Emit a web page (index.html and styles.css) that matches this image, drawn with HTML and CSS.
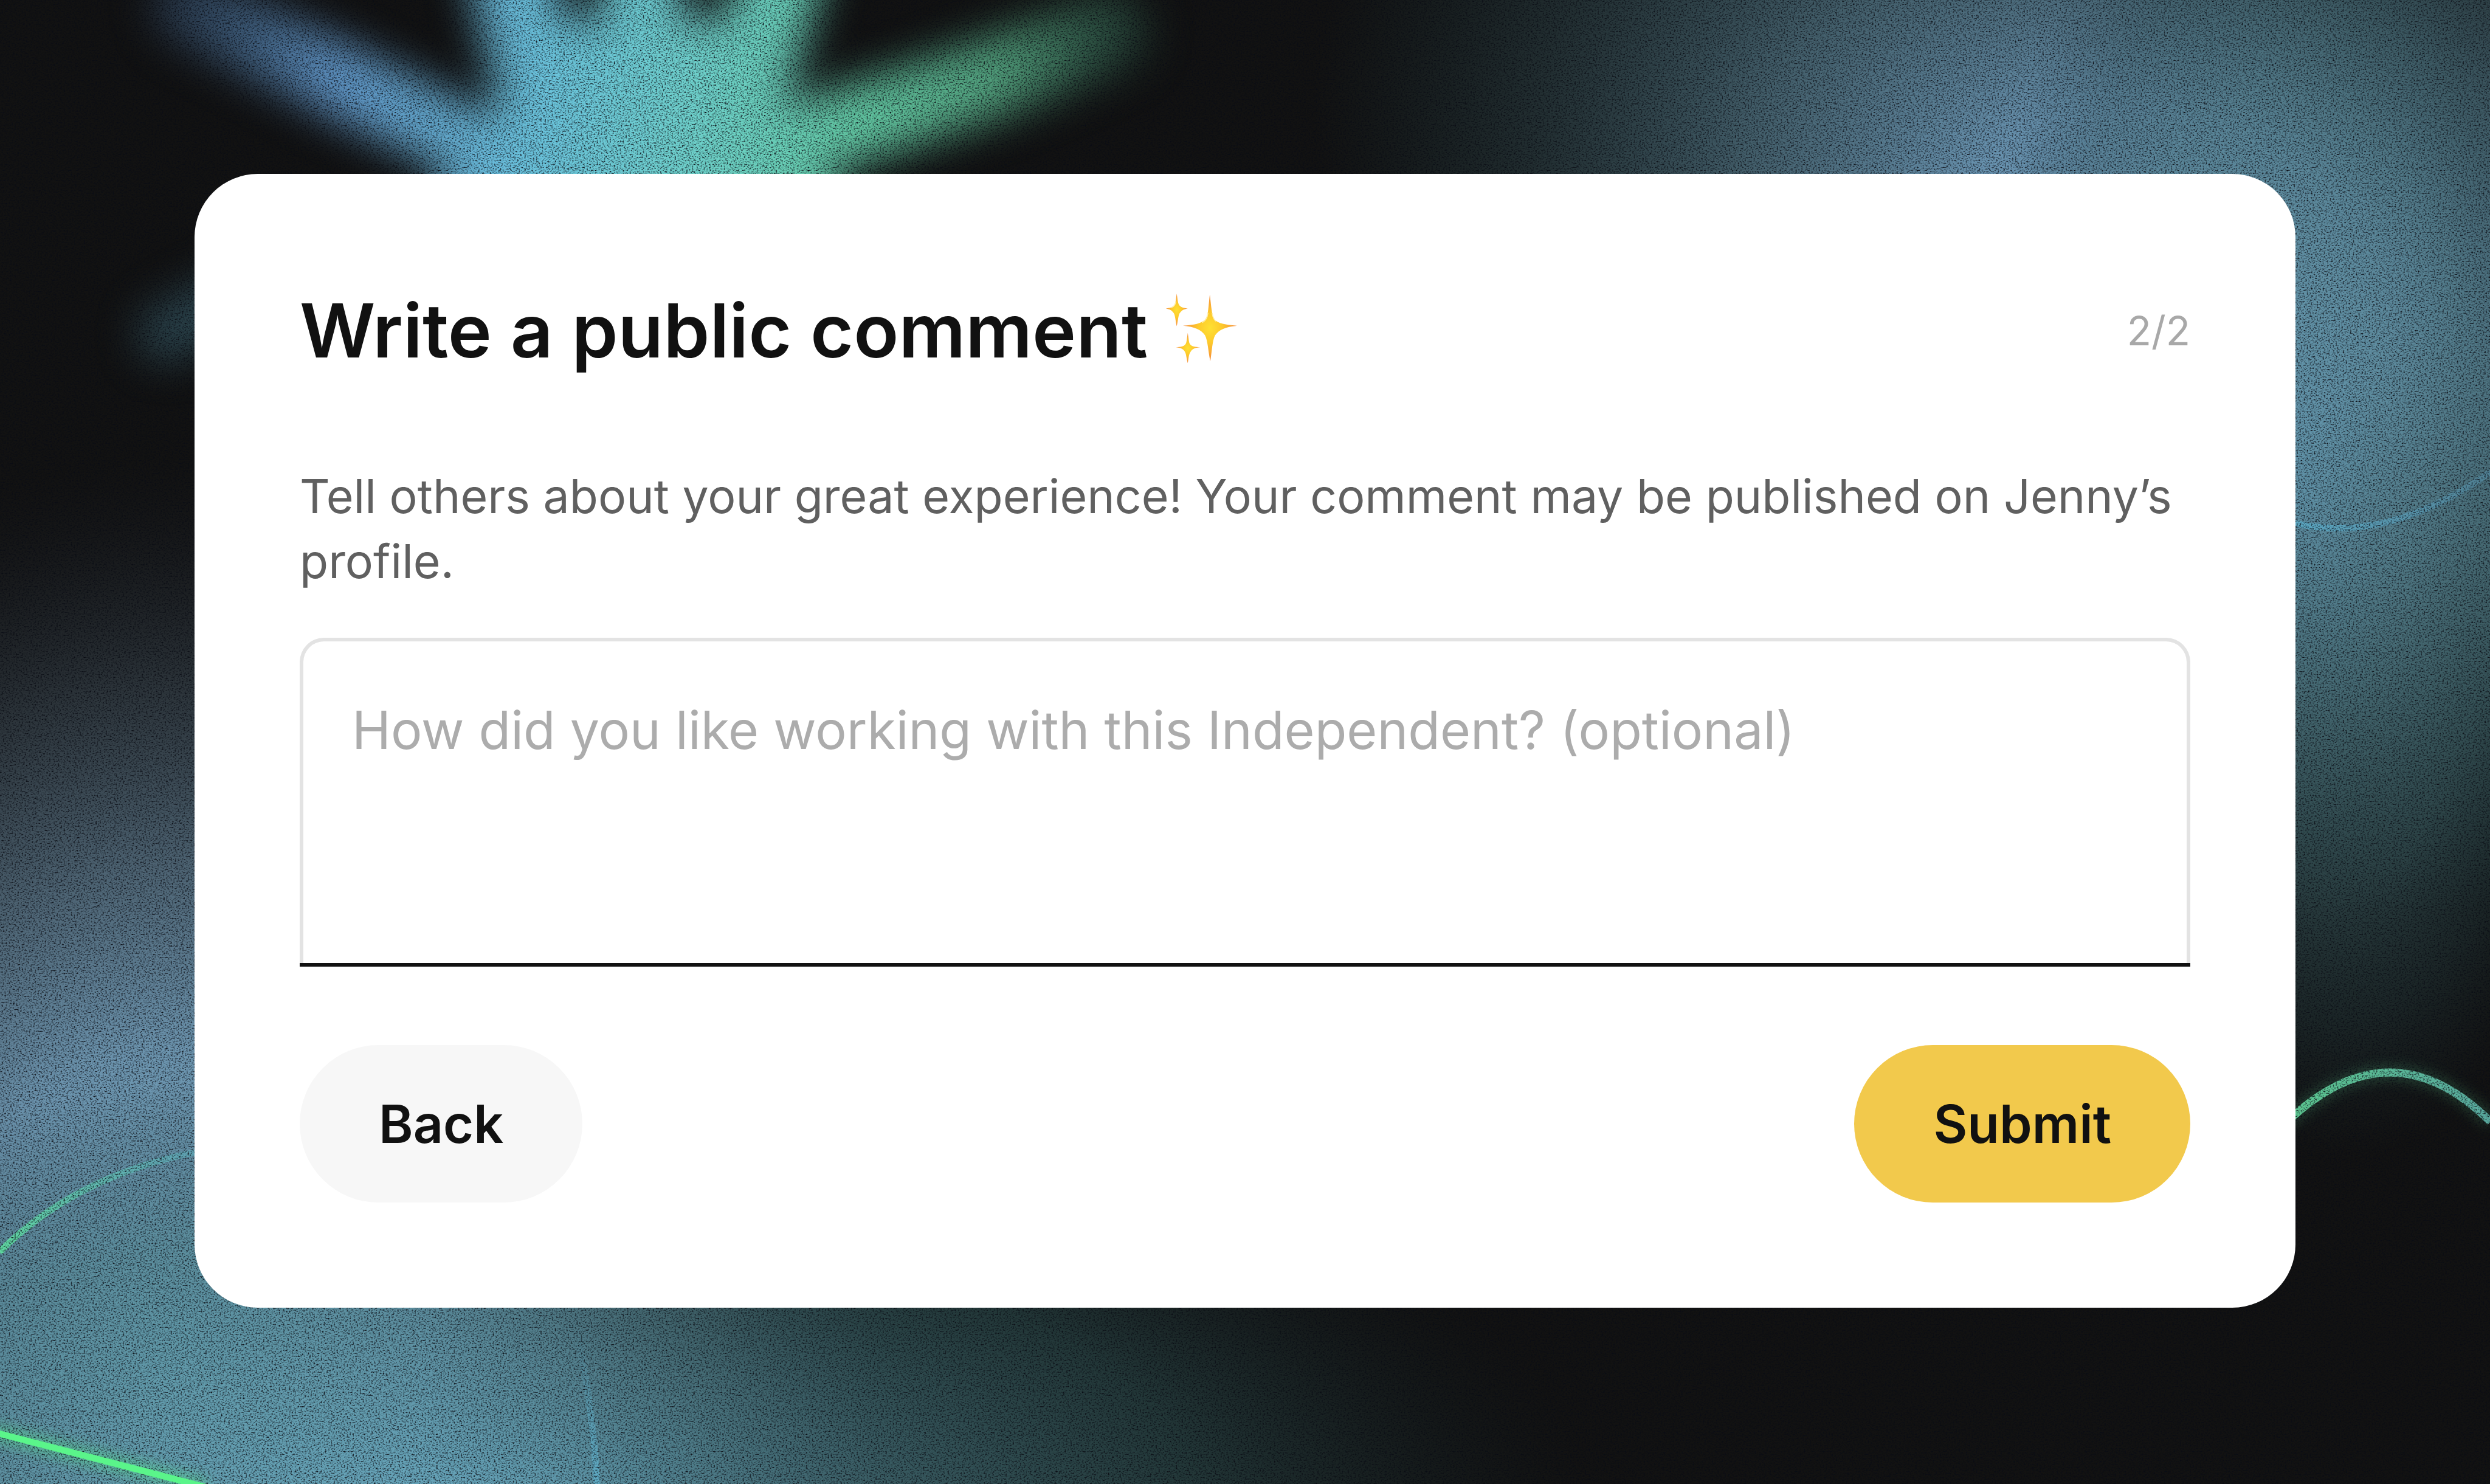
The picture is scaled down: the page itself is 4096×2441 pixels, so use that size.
FILE: index.html
```
<!DOCTYPE html>
<html lang="en">
<head>
  <meta charset="UTF-8">
  <meta name="viewport" content="width=device-width, initial-scale=1.0">
  <title>Write a public comment</title>
  <link rel="stylesheet" href="styles.css">
</head>
<body>
  <!-- Backdrop: colour glows, blurred hand, thin light lines, grain -->
  <svg class="backdrop" viewBox="0 0 1568 934" preserveAspectRatio="xMidYMid slice" aria-hidden="true">
    <defs>
      <radialGradient id="glowRight" gradientUnits="userSpaceOnUse" cx="0" cy="0" r="1" gradientTransform="translate(1370 170) rotate(20) scale(560 380)">
        <stop offset="0" stop-color="#74a4c6"/>
        <stop offset="0.25" stop-color="#6c98b6" stop-opacity="0.95"/>
        <stop offset="0.5" stop-color="#587f90" stop-opacity="0.7"/>
        <stop offset="0.75" stop-color="#3e6068" stop-opacity="0.35"/>
        <stop offset="1" stop-color="#25474a" stop-opacity="0"/>
      </radialGradient>
      <radialGradient id="glowEdge" gradientUnits="userSpaceOnUse" cx="0" cy="0" r="1" gradientTransform="translate(1450 310) rotate(-4) scale(200 420)">
        <stop offset="0" stop-color="#6299ae" stop-opacity="0.7"/>
        <stop offset="0.35" stop-color="#568792" stop-opacity="0.55"/>
        <stop offset="0.6" stop-color="#467278" stop-opacity="0.45"/>
        <stop offset="0.8" stop-color="#2f5054" stop-opacity="0.3"/>
        <stop offset="1" stop-color="#1e3436" stop-opacity="0"/>
      </radialGradient>
      <radialGradient id="glowLeft" gradientUnits="userSpaceOnUse" cx="0" cy="0" r="1" gradientTransform="translate(110 860) scale(450 570)">
        <stop offset="0" stop-color="#76aec6"/>
        <stop offset="0.35" stop-color="#6c94ae"/>
        <stop offset="0.55" stop-color="#587284" stop-opacity="0.85"/>
        <stop offset="0.75" stop-color="#465662" stop-opacity="0.5"/>
        <stop offset="1" stop-color="#20242c" stop-opacity="0"/>
      </radialGradient>
      <radialGradient id="glowBottom" gradientUnits="userSpaceOnUse" cx="0" cy="0" r="1" gradientTransform="translate(300 950) scale(700 280)">
        <stop offset="0" stop-color="#6ab2c8" stop-opacity="0.8"/>
        <stop offset="0.35" stop-color="#57939f" stop-opacity="0.6"/>
        <stop offset="0.65" stop-color="#3b6e70" stop-opacity="0.4"/>
        <stop offset="1" stop-color="#182a2c" stop-opacity="0"/>
      </radialGradient>
      <linearGradient id="handFill" gradientUnits="userSpaceOnUse" x1="90" y1="0" x2="720" y2="60">
        <stop offset="0" stop-color="#334a66" stop-opacity="0.5"/>
        <stop offset="0.2" stop-color="#6299cc"/>
        <stop offset="0.4" stop-color="#6ac2dc"/>
        <stop offset="0.55" stop-color="#6fd1cd"/>
        <stop offset="0.72" stop-color="#65cea8"/>
        <stop offset="0.86" stop-color="#52a07c"/>
        <stop offset="1" stop-color="#2b5244" stop-opacity="0.5"/>
      </linearGradient>
      <linearGradient id="lineArc" gradientUnits="userSpaceOnUse" x1="0" y1="790" x2="130" y2="724">
        <stop offset="0" stop-color="#5fd8a0"/>
        <stop offset="1" stop-color="#5fb4c4" stop-opacity="0.5"/>
      </linearGradient>
      <linearGradient id="lineWave" gradientUnits="userSpaceOnUse" x1="1440" y1="0" x2="1568" y2="0">
        <stop offset="0" stop-color="#5cc890"/>
        <stop offset="1" stop-color="#5aaba0"/>
      </linearGradient>
      <linearGradient id="lineFaint" gradientUnits="userSpaceOnUse" x1="1440" y1="0" x2="1568" y2="0">
        <stop offset="0" stop-color="#5cb0cc" stop-opacity="0.8"/>
        <stop offset="1" stop-color="#5aa0c0" stop-opacity="0.35"/>
      </linearGradient>
      <linearGradient id="lineDrop" gradientUnits="userSpaceOnUse" x1="0" y1="840" x2="0" y2="934">
        <stop offset="0" stop-color="#5fb0cb" stop-opacity="0"/>
        <stop offset="1" stop-color="#5fb0cb" stop-opacity="0.8"/>
      </linearGradient>
      <filter id="handBlur" filterUnits="userSpaceOnUse" x="0" y="-150" width="860" height="500" color-interpolation-filters="sRGB">
        <feGaussianBlur stdDeviation="13"/>
      </filter>
      <filter id="lineGlow" filterUnits="userSpaceOnUse" x="-20" y="600" width="1610" height="360">
        <feGaussianBlur stdDeviation="4"/>
      </filter>
      <filter id="grain" x="0" y="0" width="100%" height="100%" color-interpolation-filters="sRGB">
        <feTurbulence type="fractalNoise" baseFrequency="1.1" numOctaves="2" seed="4"/>
        <feColorMatrix values="0 0 0 0 0.04  0 0 0 0 0.05  0 0 0 0 0.08  3.4 0 0 0 -1.7"/>
      </filter>
    </defs>
    <rect width="1568" height="934" fill="#121212"/>
    <rect width="1568" height="934" fill="url(#glowRight)"/>
    <rect width="1568" height="934" fill="url(#glowEdge)"/>
    <rect width="1568" height="934" fill="url(#glowLeft)"/>
    <rect width="1568" height="934" fill="url(#glowBottom)"/>
    <g filter="url(#handBlur)" stroke="url(#handFill)" fill="none" stroke-linecap="round">
      <path d="M312 -60 L342 70" stroke-width="52"/>
      <path d="M403 -60 L405 60" stroke-width="50"/>
      <path d="M506 -60 L466 70" stroke-width="52"/>
      <path d="M118 4 Q200 44 320 102" stroke-width="44"/>
      <path d="M700 20 Q600 62 470 98" stroke-width="48"/>
      <path d="M322 12 L484 12 L494 70 L545 150 L258 150 L312 70 Z" fill="url(#handFill)" stroke="none"/>
      <path d="M105 210 L180 170" stroke="#4a8194" stroke-width="36" opacity="0.45"/>
    </g>
    <g fill="none" stroke-width="4">
      <path d="M1440 328 Q1500 345 1568 297" stroke="url(#lineFaint)"/>
      <path d="M364 840 Q374 890 376 934" stroke="url(#lineDrop)"/>
      <path d="M0 788 Q50 738 130 724" stroke="url(#lineArc)"/>
      <path d="M1440 706 Q1505 644 1568 706" stroke="#54b983" stroke-width="8" opacity="0.3" filter="url(#lineGlow)"/>
      <path d="M1440 706 Q1505 644 1568 706" stroke="url(#lineWave)" stroke-width="5"/>
      <path d="M-5 901 L130 936" stroke="#4fe883" stroke-width="10" opacity="0.45" filter="url(#lineGlow)"/>
    </g>
    <rect width="1568" height="934" filter="url(#grain)"/>
    <path d="M-5 901 L130 936" fill="none" stroke="#5af58a" stroke-width="4"/>
  </svg>

  <main class="page">
    <form class="card">
      <header class="card-header">
        <h1 class="title">
          Write a public comment
          <svg class="sparkles" viewBox="0 0 156 156" aria-hidden="true">
            <defs>
              <radialGradient id="gold">
                <stop offset="0" stop-color="#fee032"/>
                <stop offset="0.45" stop-color="#fdc92c"/>
                <stop offset="1" stop-color="#f58a3c"/>
              </radialGradient>
            </defs>
            <g fill="url(#gold)">
              <path d="M94 2 C97 27 98 44 103 53 C111 63 128 65 151 67 C128 69 113 75 105 87 C99 99 99 117 95 141 C90 117 90 99 84 87 C76 75 61 69 38 67 C61 65 77 63 85 53 C91 44 91 27 94 2 Z"/>
              <path d="M25 0 C27 13 27 20 31 25 C35 29 40 30 48 31 C40 32 35 35 31 41 C28 47 28 54 25 68 C22 54 22 47 19 41 C15 35 10 32 2 31 C10 30 15 29 19 25 C23 20 23 13 25 0 Z"/>
              <path d="M48 82 C50 94 50 102 53 106 C57 111 63 111 74 112 C63 113 58 115 54 121 C50 127 50 133 48 145 C45 133 45 127 42 121 C38 115 33 113 23 112 C33 111 39 111 43 106 C46 102 46 94 48 82 Z"/>
            </g>
            <g fill="none" stroke="#ffefb0" stroke-linecap="round" stroke-width="2">
              <path d="M90 41 C89 49 87 55 79 60"/>
              <path d="M99 41 C100 48 102 53 106 57"/>
              <path d="M23 17 C22 23 20 27 14 29"/>
            </g>
          </svg>
        </h1>
        <span class="step">2/2</span>
      </header>
      <label class="description" for="comment">Tell others about your great experience! Your comment may be published on Jenny’s profile.</label>
      <textarea class="comment" id="comment" placeholder="How did you like working with this Independent? (optional)"></textarea>
      <div class="actions">
        <button class="button" type="button">Back</button>
        <button class="button button-primary" type="submit">Submit</button>
      </div>
    </form>
  </main>
</body>
</html>
```
FILE: styles.css
```
* {
  box-sizing: border-box;
}
body {
  margin: 0;
  background-color: #111;
  color: #111;
  font-family: Inter, "Liberation Sans", sans-serif;
}
.backdrop {
  position: fixed;
  inset: 0;
  width: 100%;
  height: 100%;
}
.page {
  position: relative;
  display: flex;
  align-items: center;
  min-height: 100vh;
  padding: 0 320px 4px;
}
.card {
  display: flex;
  flex-direction: column;
  width: 100%;
  padding: 173px;
  border-radius: 104px;
  background-color: #fff;
}
.card-header {
  display: flex;
  align-items: center;
  justify-content: space-between;
  margin-bottom: 134px;
}
.title {
  display: flex;
  align-items: center;
  gap: 28px;
  margin: 0;
  font-size: 122px;
  font-weight: 600;
  line-height: 170px;
}
.sparkles {
  width: 123px;
  height: 123px;
}
.step {
  color: #a8a8a8;
  font-size: 66px;
}
.description {
  margin-bottom: 72px;
  color: #606060;
  font-size: 77px;
  line-height: 107px;
}
.comment {
  height: 535px;
  padding: 82px 80px;
  border: 6px solid #e3e3e3;
  border-bottom: none;
  border-radius: 40px 40px 0 0;
  box-shadow: 0 6px #111;
  color: #111;
  font-family: inherit;
  font-size: 86px;
  line-height: 128px;
  outline: none;
  resize: none;
}
.comment::placeholder {
  color: #acacac;
  opacity: 1;
}
.actions {
  display: flex;
  justify-content: space-between;
  margin-top: 135px;
}
.button {
  height: 259px;
  padding: 0 130px;
  border: none;
  border-radius: 130px;
  background-color: #f7f7f7;
  color: #111;
  font-family: inherit;
  font-size: 86px;
  font-weight: 600;
  cursor: pointer;
}
.button-primary {
  background-color: #f2c94c;
}
```
